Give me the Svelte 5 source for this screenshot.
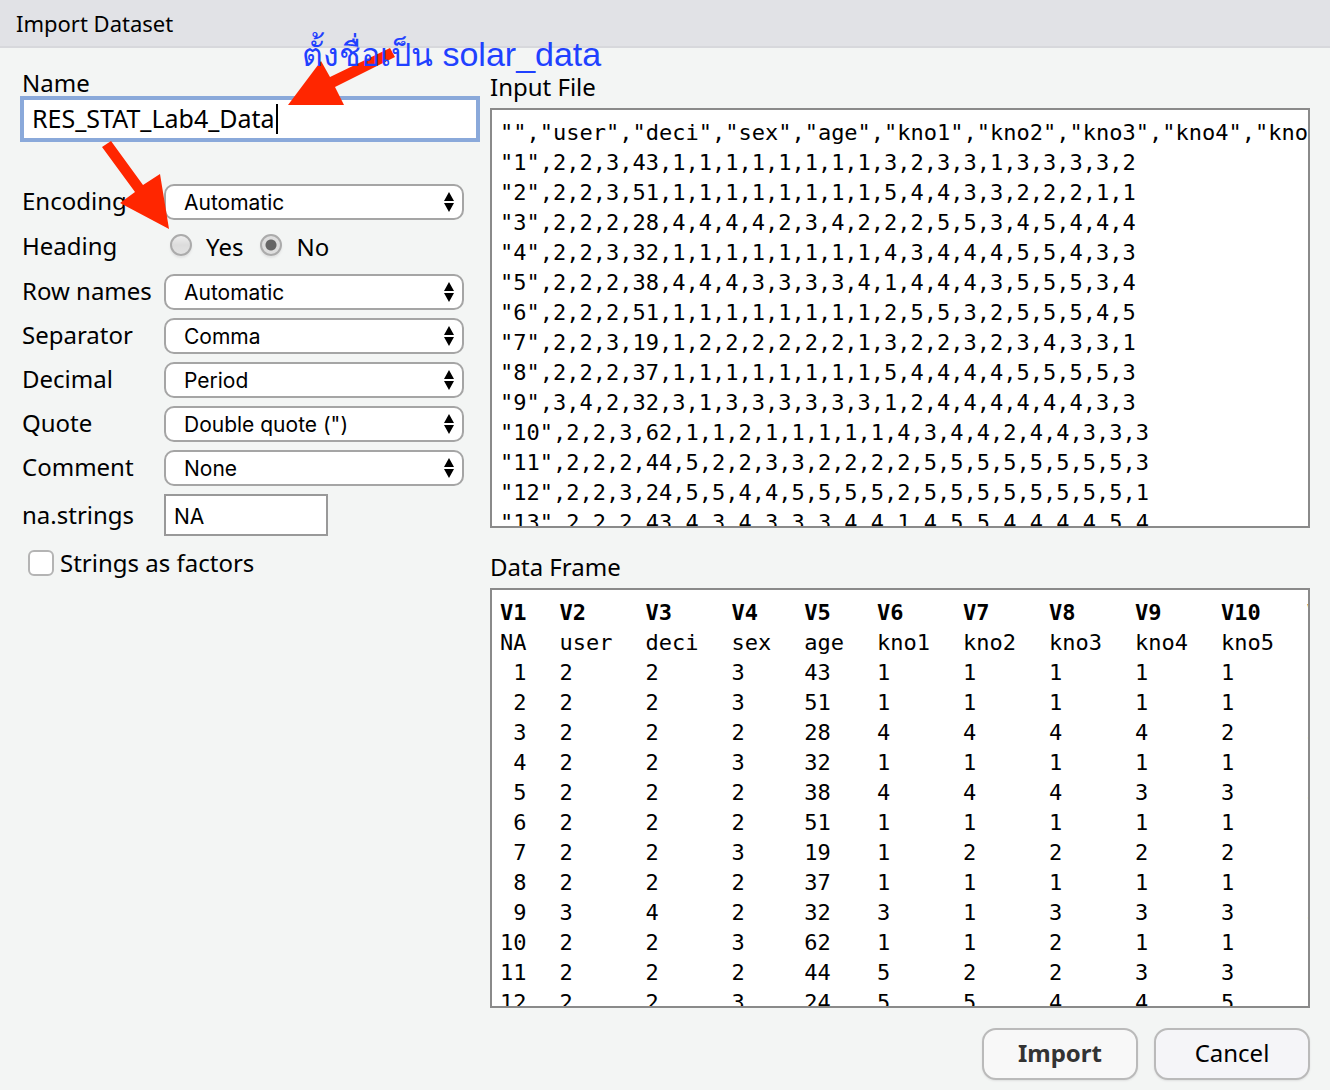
<script>
  const lines = [
    '"","user","deci","sex","age","kno1","kno2","kno3","kno4","kno5"',
    '"1",2,2,3,43,1,1,1,1,1,1,1,1,3,2,3,3,1,3,3,3,3,2',
    '"2",2,2,3,51,1,1,1,1,1,1,1,1,5,4,4,3,3,2,2,2,1,1',
    '"3",2,2,2,28,4,4,4,4,2,3,4,2,2,2,5,5,3,4,5,4,4,4',
    '"4",2,2,3,32,1,1,1,1,1,1,1,1,4,3,4,4,4,5,5,4,3,3',
    '"5",2,2,2,38,4,4,4,3,3,3,3,4,1,4,4,4,3,5,5,5,3,4',
    '"6",2,2,2,51,1,1,1,1,1,1,1,1,2,5,5,3,2,5,5,5,4,5',
    '"7",2,2,3,19,1,2,2,2,2,2,2,1,3,2,2,3,2,3,4,3,3,1',
    '"8",2,2,2,37,1,1,1,1,1,1,1,1,5,4,4,4,4,5,5,5,5,3',
    '"9",3,4,2,32,3,1,3,3,3,3,3,3,1,2,4,4,4,4,4,4,3,3',
    '"10",2,2,3,62,1,1,2,1,1,1,1,1,4,3,4,4,2,4,4,3,3,3',
    '"11",2,2,2,44,5,2,2,3,3,2,2,2,2,5,5,5,5,5,5,5,5,3',
    '"12",2,2,3,24,5,5,4,4,5,5,5,5,2,5,5,5,5,5,5,5,5,1',
    '"13",2,2,2,43,4,3,4,3,3,3,4,4,1,4,5,5,4,4,4,4,5,4'
  ];

  const frame = lines.slice(0, 13).map((line) =>
    line.split(',').slice(0, 11).map((cell) => cell.replaceAll('"', '') || 'NA')
  );
  const columns = frame[1].map((_, i) => `V${i + 1}`);

  const formats = [
    { id: 'rownames', label: 'Row names', value: 'Automatic' },
    { id: 'separator', label: 'Separator', value: 'Comma' },
    { id: 'decimal', label: 'Decimal', value: 'Period' },
    { id: 'quote', label: 'Quote', value: 'Double quote (")' },
    { id: 'comment', label: 'Comment', value: 'None' }
  ];

  let name = $state('RES_STAT_Lab4_Data');
  let heading = $state('no');
  let naStrings = $state('NA');
  let factors = $state(false);
</script>

{#snippet picker(id, label, value)}
  <label class="caption" for={id}>{label}</label>
  <div class="picker">
    <select {id}><option>{value}</option></select>
    <svg class="chevrons" viewBox="0 0 10 20" aria-hidden="true">
      <path d="M5 0 10 9H0ZM0 11H10L5 20Z" />
    </svg>
  </div>
{/snippet}

<div class="dialog" role="dialog" aria-labelledby="title">
  <header><h1 id="title">Import Dataset</h1></header>

  <main>
    <form class="options">
      <label class="name-label" for="name">Name</label>
      <div class="name-field">
        <input id="name" type="text" bind:value={name} spellcheck="false" />
        <span class="caret"></span>
      </div>

      <div class="fields">
        {@render picker('encoding', 'Encoding', 'Automatic')}

        <span class="caption" id="heading">Heading</span>
        <div class="radios" role="radiogroup" aria-labelledby="heading">
          <label><input type="radio" name="heading" value="yes" bind:group={heading} />Yes</label>
          <label><input type="radio" name="heading" value="no" bind:group={heading} />No</label>
        </div>

        {#each formats as f}
          {@render picker(f.id, f.label, f.value)}
        {/each}

        <label for="na">na.strings</label>
        <input id="na" class="na" type="text" bind:value={naStrings} />
      </div>

      <label class="check"><input type="checkbox" bind:checked={factors} />Strings as factors</label>
    </form>

    <div class="previews">
      <section>
        <h2>Input File</h2>
        <pre class="pane">{lines.join('\n')}</pre>
      </section>
      <section>
        <h2>Data Frame</h2>
        <div class="pane">
          <table>
            <thead>
              <tr>{#each columns as c}<th>{c}</th>{/each}</tr>
            </thead>
            <tbody>
              {#each frame as row}
                <tr>{#each row as cell}<td>{cell}</td>{/each}</tr>
              {/each}
            </tbody>
          </table>
        </div>
      </section>
    </div>
  </main>

  <footer>
    <button class="primary" type="button">Import</button>
    <button type="button">Cancel</button>
  </footer>

  <svg class="arrows" width="480" height="240" viewBox="0 0 480 240" aria-hidden="true">
    <path d="M102 147 111 141 143 185 160 174 169 229 120 203 135 192Z" />
    <path d="M288 105 321 61 330 77 390 48 395 57 335 87 344 105Z" />
  </svg>
  <p class="note"><span lang="th">ตั้งชื่อเป็น</span> solar_data</p>
</div>

<style>
  :global(body) {
    margin: 0;
    background: #f3f5f4;
  }
  .dialog {
    position: relative;
    min-height: 100vh;
    box-sizing: border-box;
    overflow: hidden;
    font: 24px/30px "Noto Sans", sans-serif;
    color: #000;
  }
  .dialog * {
    box-sizing: border-box;
  }
  header {
    height: 48px;
    padding: 0 16px;
    background: #e1e2e6;
    border-bottom: 2px solid #d7d8dc;
  }
  h1 {
    margin: 0;
    font-size: 22px;
    line-height: 46px;
    font-weight: 400;
  }
  main {
    display: flex;
    gap: 10px;
    padding: 20px 20px 0;
  }
  .options {
    flex: 0 0 460px;
    padding-top: 4px;
  }
  .name-label {
    display: block;
    padding: 0 2px 2px;
    line-height: 22px;
  }
  .name-field {
    position: relative;
  }
  .name-field input {
    display: block;
    width: 100%;
    height: 46px;
    padding: 0 8px 2px;
    border: 4px solid #8aa9da;
    outline: 0;
    background: #fff;
    font: 25px/30px "Noto Sans", sans-serif;
  }
  .caret {
    position: absolute;
    left: 256px;
    top: 8px;
    width: 2px;
    height: 30px;
    background: #000;
  }
  .fields {
    display: grid;
    grid-template-columns: 142px 300px;
    grid-template-rows: 36px 38px repeat(5, 36px) 42px;
    row-gap: 8px;
    align-items: center;
    margin-top: 42px;
    padding-left: 2px;
  }
  .caption {
    padding-bottom: 2px;
  }
  .picker {
    position: relative;
  }
  select {
    display: block;
    appearance: none;
    width: 100%;
    height: 36px;
    padding: 1px 32px 0 18px;
    border: 2px solid #a5a5a5;
    border-radius: 10px;
    background: #fff;
    color: #000;
    font: 21px/30px Inter, sans-serif;
  }
  .chevrons {
    position: absolute;
    right: 10px;
    top: 8px;
    width: 10px;
    height: 20px;
    pointer-events: none;
  }
  .radios {
    display: flex;
    gap: 17px;
    padding-left: 6px;
  }
  .radios label {
    display: flex;
    align-items: center;
    gap: 14px;
  }
  input[type="radio"] {
    appearance: none;
    width: 22px;
    height: 22px;
    margin: 0 0 4px;
    border: 2px solid #ababab;
    border-radius: 50%;
    background: linear-gradient(#eee, #dcdcdc 50%, #e2e2e2);
    box-shadow: 0 2px 2px #e2e3e3;
  }
  input[type="radio"]:checked {
    background: radial-gradient(circle, #666 5px, #dedede 6px);
  }
  .na {
    width: 164px;
    height: 42px;
    padding: 2px 8px 0;
    border: 2px solid #999;
    background: #fff;
    font: 21px/30px Inter, sans-serif;
  }
  .check {
    display: flex;
    align-items: center;
    gap: 6px;
    height: 38px;
    margin-top: 8px;
    padding-left: 8px;
  }
  .check input {
    appearance: none;
    width: 26px;
    height: 26px;
    margin: 0;
    border: 2px solid #b4b4b4;
    border-radius: 6px;
    background: #fff;
  }
  .previews {
    flex: 1;
    min-width: 0;
    display: grid;
    gap: 20px;
  }
  section {
    min-width: 0;
  }
  h2 {
    margin: 0;
    padding-bottom: 2px;
    font-size: 24px;
    line-height: 38px;
    font-weight: 400;
  }
  .pane {
    height: 420px;
    margin: 0;
    padding: 8px 0 0 8px;
    border: 2px solid #8a8a8a;
    background: #fff;
    overflow: hidden;
    font: 22px/30px "DejaVu Sans Mono", monospace;
  }
  table {
    border-collapse: collapse;
  }
  th,
  td {
    padding: 0 33px 0 0;
    text-align: left;
    white-space: nowrap;
  }
  td:first-child {
    text-align: right;
  }
  footer {
    display: flex;
    justify-content: flex-end;
    gap: 16px;
    padding: 20px 20px 10px;
  }
  button {
    width: 156px;
    height: 52px;
    padding: 0 0 2px;
    border: 2px solid #bababa;
    border-radius: 14px;
    background: #f5f5f8;
    box-shadow: 0 1px 2px #dfe0e0;
    color: #000;
    font: inherit;
  }
  .primary {
    background: #f8f8f8;
    color: #333;
    font-weight: 700;
  }
  .arrows {
    position: absolute;
    left: 0;
    top: 0;
    fill: #ff2600;
    pointer-events: none;
  }
  .note {
    position: absolute;
    left: 302px;
    top: 34px;
    margin: 0;
    color: #1f41ff;
    font: 34px/40px "Liberation Sans", sans-serif;
    white-space: nowrap;
    pointer-events: none;
  }
  .note span {
    font-size: 32px;
  }
</style>
